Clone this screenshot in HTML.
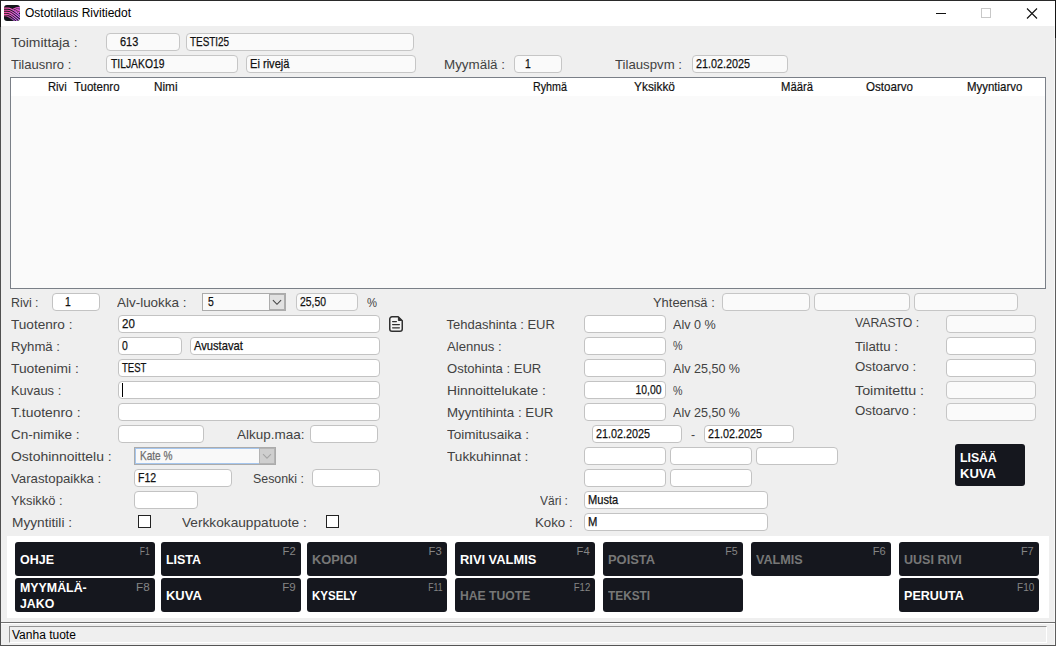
<!DOCTYPE html><html><head><meta charset="utf-8"><title>Ostotilaus Rivitiedot</title><style>
*{box-sizing:border-box;margin:0;padding:0}
html,body{width:1056px;height:646px;overflow:hidden;background:#efefef;font-family:"Liberation Sans",sans-serif;}
#w{position:absolute;left:0;top:0;width:1056px;height:646px;background:#efefef;overflow:hidden}
.a{position:absolute}
.l{position:absolute;font-size:13px;color:#424242;white-space:nowrap;line-height:16px;height:16px;transform-origin:0 50%}
.i{position:absolute;border:1px solid #c3c3c3;border-radius:4px;background:#fff;height:18px;overflow:hidden}
.i.r{background:#fafafa;border-color:#c6c6c6}
.t{position:absolute;font-size:13px;color:#111;white-space:nowrap;line-height:16px;height:16px;transform-origin:0 50%;-webkit-text-stroke:0.25px #111}
.h{position:absolute;font-size:13px;color:#111;white-space:nowrap;line-height:16px;height:16px;transform-origin:0 50%;-webkit-text-stroke:0.2px #111}
.b{position:absolute;background:#15171e;border-radius:3px;height:34px;width:140px}
.n{position:absolute;font-weight:bold;font-size:12px;color:#fff;white-space:nowrap;line-height:16px;height:16px;transform-origin:0 50%}
.d .n{color:#777}
.k{position:absolute;font-size:10px;color:#858585;line-height:12px;height:12px;white-space:nowrap;transform-origin:100% 78%}
</style></head><body><div id="w">
<div class="a" style="left:0;top:0;width:1056px;height:26px;background:#fff"></div>
<svg class="a" style="left:4px;top:5px" width="16" height="16" viewBox="0 0 16 16"><defs><linearGradient id="g" x1="0" y1="0" x2="1" y2="0.5"><stop offset="0" stop-color="#f6529c"/><stop offset="0.45" stop-color="#e45ac8"/><stop offset="1" stop-color="#d06af4"/></linearGradient><clipPath id="c"><rect width="16" height="16" rx="3"/></clipPath></defs><rect width="16" height="16" rx="3" fill="#14161c"/><g clip-path="url(#c)" fill="none" stroke="url(#g)" stroke-width="1.15"><path d="M0 3.1 H4 C8 3.1 10 5.6 16 10.4"/><path d="M0 5.2 H3.5 C7.5 5.2 9.5 7.6 16 12.7"/><path d="M0 7.3 H3 C7 7.3 9 9.6 16 15.6"/><path d="M0 9.4 H2.5 C6 9.4 8 11.2 13.4 16"/><path d="M0 10.8 C4 10.6 6 12.2 10.8 16" stroke-opacity=".75"/><path d="M16 2.3 C13 2.3 11 3 9 4.2"/><path d="M16 3.8 C13.6 3.8 12.2 4.4 10.6 5.4"/><path d="M16 5.3 C14.2 5.3 13.2 5.9 12.2 6.6"/><path d="M16 6.8 C15 6.8 14.4 7.3 13.8 7.9"/></g></svg>
<div class="a" style="left:25px;top:5px;font-size:12px;line-height:16px;color:#000;white-space:nowrap">Ostotilaus Rivitiedot</div>
<svg class="a" style="left:930px;top:0px" width="124" height="26" viewBox="0 0 124 26"><path d="M6 13.5 H16" stroke="#111" stroke-width="1"/><rect x="51.5" y="8.5" width="9" height="9" fill="none" stroke="#c8c8c8" stroke-width="1"/><path d="M97 8.5 L107 18.5 M107 8.5 L97 18.5" stroke="#111" stroke-width="1.1"/></svg>
<div class="l" style="left:10.5px;top:35px;transform:scaleX(1.072)">Toimittaja :</div>
<div class="i r" style="left:106px;top:33px;width:74px;height:18px;"><div class="t" style="left:12.5px;top:-0.5px;transform:scaleX(0.842);">613</div></div>
<div class="i r" style="left:186px;top:33px;width:228px;height:18px;"><div class="t" style="left:3px;top:-0.5px;transform:scaleX(0.763);">TESTI25</div></div>
<div class="l" style="left:10.5px;top:57px;transform:scaleX(1.001)">Tilausnro :</div>
<div class="i r" style="left:106px;top:55px;width:132px;height:18px;"><div class="t" style="left:3.5px;top:-0.5px;transform:scaleX(0.795);">TILJAKO19</div></div>
<div class="i r" style="left:246px;top:55px;width:170px;height:18px;"><div class="t" style="left:3px;top:-0.5px;transform:scaleX(0.853);">Ei rivejä</div></div>
<div class="l" style="left:443.5px;top:57px;transform:scaleX(1.030)">Myymälä :</div>
<div class="i r" style="left:514px;top:55px;width:48px;height:18px;"><div class="t" style="left:10px;top:-0.5px;transform:scaleX(0.800);">1</div></div>
<div class="l" style="left:614.5px;top:57px;transform:scaleX(1.015)">Tilauspvm :</div>
<div class="i r" style="left:692px;top:55px;width:96px;height:18px;"><div class="t" style="left:3px;top:-0.5px;transform:scaleX(0.830);">21.02.2025</div></div>
<div class="a" style="left:10px;top:77px;width:1036px;height:212px;border:1px solid #7a7f87;background:#fafafa"><div class="a" style="left:0;top:0;width:1034px;height:18px;background:#fff"></div></div>
<div class="h" style="left:47.8px;top:79px;transform:scaleX(0.863)">Rivi</div>
<div class="h" style="left:74.0px;top:79px;transform:scaleX(0.883)">Tuotenro</div>
<div class="h" style="left:153.5px;top:79px;transform:scaleX(0.904)">Nimi</div>
<div class="h" style="left:532.5px;top:79px;transform:scaleX(0.826)">Ryhmä</div>
<div class="h" style="left:633.5px;top:79px;transform:scaleX(0.915)">Yksikkö</div>
<div class="h" style="left:780.5px;top:79px;transform:scaleX(0.868)">Määrä</div>
<div class="h" style="left:865.5px;top:79px;transform:scaleX(0.891)">Ostoarvo</div>
<div class="h" style="left:967.1px;top:79px;transform:scaleX(0.880)">Myyntiarvo</div>
<div class="l" style="left:10.5px;top:295px;transform:scaleX(0.952)">Rivi :</div>
<div class="i" style="left:52px;top:293px;width:48px;height:18px;"><div class="t" style="left:12px;top:-0.5px;transform:scaleX(0.800);">1</div></div>
<div class="l" style="left:116.5px;top:295px;transform:scaleX(1.034)">Alv-luokka :</div>
<div class="a" style="left:202px;top:293px;width:84px;height:18px;border:1px solid #ababab;background:#fafafa"><div class="t" style="left:5px;top:-0.5px;transform:scaleX(.8)">5</div><div class="a" style="right:0;top:0;width:16px;height:16px;background:#e1e1e1;border:1px solid #adadad"><svg class="a" style="left:0;top:0" width="14" height="14" viewBox="0 0 14 14"><path d="M2.9 5.2 L7 9.3 L11.1 5.2" stroke="#444" fill="none" stroke-width="1.1"/></svg></div></div>
<div class="i r" style="left:296px;top:293px;width:62px;height:18px;"><div class="t" style="left:3px;top:-0.5px;transform:scaleX(0.798);">25,50</div></div>
<div class="l" style="left:366.5px;top:295px;transform:scaleX(0.865)">%</div>
<div class="l" style="left:10.5px;top:317px;transform:scaleX(1.046)">Tuotenro :</div>
<div class="i" style="left:118px;top:315px;width:262px;height:18px;"><div class="t" style="left:3px;top:-0.5px;transform:scaleX(0.886);">20</div></div>
<div class="l" style="left:10.5px;top:339px;transform:scaleX(1.012)">Ryhmä :</div>
<div class="i" style="left:118px;top:337px;width:64px;height:18px;"><div class="t" style="left:3px;top:-0.5px;transform:scaleX(0.800);">0</div></div>
<div class="i" style="left:190px;top:337px;width:190px;height:18px;"><div class="t" style="left:3px;top:-0.5px;transform:scaleX(0.859);">Avustavat</div></div>
<div class="l" style="left:10.5px;top:361px;transform:scaleX(1.062)">Tuotenimi :</div>
<div class="i" style="left:118px;top:359px;width:262px;height:18px;"><div class="t" style="left:3px;top:-0.5px;transform:scaleX(0.734);">TEST</div></div>
<div class="l" style="left:10.5px;top:383px;transform:scaleX(0.993)">Kuvaus :</div>
<div class="i" style="left:118px;top:381px;width:262px;height:18px;"></div>
<div class="a" style="left:122px;top:383px;width:1px;height:14px;background:#000"></div>
<div class="l" style="left:10.5px;top:405px;transform:scaleX(1.069)">T.tuotenro :</div>
<div class="i" style="left:118px;top:403px;width:262px;height:18px;"></div>
<div class="l" style="left:10.5px;top:427px;transform:scaleX(1.042)">Cn-nimike :</div>
<div class="i" style="left:118px;top:425px;width:86px;height:18px;"></div>
<div class="l" style="left:237.0px;top:427px;transform:scaleX(1.038)">Alkup.maa:</div>
<div class="i" style="left:310px;top:425px;width:68px;height:18px;"></div>
<div class="l" style="left:10.5px;top:449px;transform:scaleX(1.072)">Ostohinnoittelu :</div>
<div class="a" style="left:134px;top:447px;width:142px;height:18px;border:1px solid #ababab;background:#fff"><div class="a" style="left:0;top:0;width:125px;height:16px;border:1px solid #a5c6ee;background:#f9f9f9"></div><div class="t" style="left:5px;top:-0.5px;color:#6d6d6d;-webkit-text-stroke-color:#6d6d6d;transform:scaleX(.775)">Kate %</div><div class="a" style="right:0;top:0;width:16px;height:16px;background:#cfcfcf;border:1px solid #b4b4b4"><svg class="a" style="left:0;top:0" width="14" height="14" viewBox="0 0 14 14"><path d="M3 5.2 L7 9.2 L11 5.2" stroke="#a6a6a6" fill="none" stroke-width="1.1"/></svg></div></div>
<div class="l" style="left:10.5px;top:471px;transform:scaleX(1.018)">Varastopaikka :</div>
<div class="i" style="left:134px;top:469px;width:98px;height:18px;"><div class="t" style="left:3px;top:-0.5px;transform:scaleX(0.811);">F12</div></div>
<div class="l" style="left:252.8px;top:471px;transform:scaleX(0.952)">Sesonki :</div>
<div class="i" style="left:312px;top:469px;width:68px;height:18px;"></div>
<div class="l" style="left:10.5px;top:493px;transform:scaleX(0.990)">Yksikkö :</div>
<div class="i" style="left:134px;top:491px;width:64px;height:18px;"></div>
<div class="l" style="left:12.0px;top:515px;transform:scaleX(1.052)">Myyntitili :</div>
<div class="a" style="left:138px;top:515px;width:13px;height:13px;border:1px solid #222;background:#fff"></div>
<div class="l" style="left:181.5px;top:515px;transform:scaleX(1.052)">Verkkokauppatuote :</div>
<div class="a" style="left:326px;top:515px;width:13px;height:13px;border:1px solid #222;background:#fff"></div>
<svg class="a" style="left:389px;top:316px" width="14" height="16" viewBox="0 0 14 16"><path d="M3 .75 H9.2 L13.25 4.8 V13 a2.25 2.25 0 0 1 -2.25 2.25 H3 a2.25 2.25 0 0 1 -2.25 -2.25 V3 a2.25 2.25 0 0 1 2.25 -2.25 Z" fill="#f6f6f6" stroke="#303030" stroke-width="1.5" stroke-linejoin="round"/><path d="M9.4 1.2 V4.5 H12.7 Z" fill="#303030" stroke="#303030" stroke-width="1" stroke-linejoin="round"/><path d="M3.6 5.55 H7.4 M3.6 8.6 H10.4 M3.6 11.75 H10.4" stroke="#303030" stroke-width="1.25" stroke-linecap="round"/></svg>
<div class="l" style="left:446.5px;top:317px;transform:scaleX(1.000)">Tehdashinta : EUR</div>
<div class="i" style="left:584px;top:315px;width:82px;height:18px;"></div>
<div class="l" style="left:672.5px;top:317px;transform:scaleX(0.971)">Alv 0 %</div>
<div class="l" style="left:446.5px;top:339px;transform:scaleX(1.009)">Alennus :</div>
<div class="i" style="left:584px;top:337px;width:82px;height:18px;"></div>
<div class="l" style="left:672.5px;top:338px;transform:scaleX(0.822)">%</div>
<div class="l" style="left:446.5px;top:361px;transform:scaleX(1.003)">Ostohinta : EUR</div>
<div class="i" style="left:584px;top:359px;width:82px;height:18px;"></div>
<div class="l" style="left:672.5px;top:361px;transform:scaleX(0.966)">Alv 25,50 %</div>
<div class="l" style="left:446.5px;top:383px;transform:scaleX(1.060)">Hinnoittelukate :</div>
<div class="i" style="left:584px;top:381px;width:82px;height:18px;"><div class="t" style="right:3px;top:-0.5px;transform-origin:100% 50%;transform:scaleX(0.798);">10,00</div></div>
<div class="l" style="left:672.5px;top:383px;transform:scaleX(0.822)">%</div>
<div class="l" style="left:446.5px;top:405px;transform:scaleX(1.022)">Myyntihinta : EUR</div>
<div class="i" style="left:584px;top:403px;width:82px;height:18px;"></div>
<div class="l" style="left:672.5px;top:405px;transform:scaleX(0.966)">Alv 25,50 %</div>
<div class="l" style="left:446.5px;top:427px;transform:scaleX(1.041)">Toimitusaika :</div>
<div class="i" style="left:592px;top:425px;width:90px;height:18px;"><div class="t" style="left:3px;top:-0.5px;transform:scaleX(0.830);">21.02.2025</div></div>
<div class="l" style="left:691.2px;top:427px;transform:scaleX(0.947)">-</div>
<div class="i" style="left:704px;top:425px;width:90px;height:18px;"><div class="t" style="left:3px;top:-0.5px;transform:scaleX(0.830);">21.02.2025</div></div>
<div class="l" style="left:446.5px;top:449px;transform:scaleX(1.048)">Tukkuhinnat :</div>
<div class="i" style="left:584px;top:447px;width:82px;height:18px;"></div>
<div class="i" style="left:670px;top:447px;width:82px;height:18px;"></div>
<div class="i" style="left:756px;top:447px;width:82px;height:18px;"></div>
<div class="i" style="left:584px;top:469px;width:82px;height:18px;"></div>
<div class="i" style="left:670px;top:469px;width:82px;height:18px;"></div>
<div class="l" style="left:540.3px;top:493px;transform:scaleX(0.921)">Väri :</div>
<div class="i" style="left:584px;top:491px;width:184px;height:18px;"><div class="t" style="left:3px;top:-0.5px;transform:scaleX(0.854);">Musta</div></div>
<div class="l" style="left:534.9px;top:515px;transform:scaleX(1.020)">Koko :</div>
<div class="i" style="left:584px;top:513px;width:184px;height:18px;"><div class="t" style="left:3px;top:-0.5px;transform:scaleX(0.862);">M</div></div>
<div class="l" style="left:652.8px;top:295px;transform:scaleX(0.993)">Yhteensä :</div>
<div class="i r" style="left:722px;top:293px;width:88px;height:18px;"></div>
<div class="i r" style="left:814px;top:293px;width:96px;height:18px;"></div>
<div class="i r" style="left:914px;top:293px;width:104px;height:18px;"></div>
<div class="l" style="left:855.0px;top:315px;transform:scaleX(0.942)">VARASTO :</div>
<div class="i r" style="left:946px;top:315px;width:90px;height:18px;"></div>
<div class="l" style="left:855.0px;top:339px;transform:scaleX(1.020)">Tilattu :</div>
<div class="i" style="left:946px;top:337px;width:90px;height:18px;"></div>
<div class="l" style="left:855.0px;top:359px;transform:scaleX(1.019)">Ostoarvo :</div>
<div class="i" style="left:946px;top:359px;width:90px;height:18px;"></div>
<div class="l" style="left:855.0px;top:383px;transform:scaleX(1.098)">Toimitettu :</div>
<div class="i r" style="left:946px;top:381px;width:90px;height:18px;"></div>
<div class="l" style="left:855.0px;top:403px;transform:scaleX(1.019)">Ostoarvo :</div>
<div class="i r" style="left:946px;top:403px;width:90px;height:18px;"></div>
<div class="b" style="left:955px;top:444px;width:70px;height:42px"></div>
<div class="n" style="left:960.0px;top:449.9px;transform:scaleX(1.022)">LISÄÄ</div>
<div class="n" style="left:960.0px;top:465.7px;transform:scaleX(1.087)">KUVA</div>
<div class="a" style="left:7px;top:536px;width:1042px;height:82px;background:#fff"></div>
<div class="b" style="left:15px;top:542px"></div>
<div class="e"><div class="n" style="left:19.8px;top:551.7px;transform:scaleX(1.040)">OHJE</div></div>
<div class="k" style="right:906.0px;top:545.5px;transform:scale(0.843,1)">F1</div>
<div class="b" style="left:161px;top:542px"></div>
<div class="e"><div class="n" style="left:165.8px;top:551.7px;transform:scaleX(1.036)">LISTA</div></div>
<div class="k" style="right:760.0px;top:545.5px;transform:scale(1.124,1)">F2</div>
<div class="b" style="left:307px;top:542px"></div>
<div class="d"><div class="n" style="left:311.8px;top:551.7px;transform:scaleX(1.071)">KOPIOI</div></div>
<div class="k" style="right:614.0px;top:545.5px;transform:scale(1.124,1)">F3</div>
<div class="b" style="left:455px;top:542px"></div>
<div class="e"><div class="n" style="left:459.8px;top:551.7px;transform:scaleX(1.073)">RIVI VALMIS</div></div>
<div class="k" style="right:466.0px;top:545.5px;transform:scale(1.124,1)">F4</div>
<div class="b" style="left:603px;top:542px"></div>
<div class="d"><div class="n" style="left:607.8px;top:551.7px;transform:scaleX(1.076)">POISTA</div></div>
<div class="k" style="right:318.0px;top:545.5px;transform:scale(1.059,1)">F5</div>
<div class="b" style="left:751px;top:542px"></div>
<div class="d"><div class="n" style="left:755.8px;top:551.7px;transform:scaleX(1.053)">VALMIS</div></div>
<div class="k" style="right:170.0px;top:545.5px;transform:scale(1.106,1)">F6</div>
<div class="b" style="left:899px;top:542px"></div>
<div class="d"><div class="n" style="left:903.8px;top:551.7px;transform:scaleX(1.044)">UUSI RIVI</div></div>
<div class="k" style="right:22.0px;top:545.5px;transform:scale(1.096,1)">F7</div>
<div class="b" style="left:15px;top:578px"></div>
<div class="e"><div class="n" style="left:19.8px;top:580.2px;transform:scaleX(1.032)">MYYMÄLÄ-</div><div class="n" style="left:19.8px;top:595.7px;transform:scaleX(1.026)">JAKO</div></div>
<div class="k" style="right:906.0px;top:581.5px;transform:scale(1.171,1)">F8</div>
<div class="b" style="left:161px;top:578px"></div>
<div class="e"><div class="n" style="left:165.8px;top:587.7px;transform:scaleX(1.080)">KUVA</div></div>
<div class="k" style="right:760.0px;top:581.5px;transform:scale(1.153,1)">F9</div>
<div class="b" style="left:307px;top:578px"></div>
<div class="e"><div class="n" style="left:311.8px;top:587.7px;transform:scaleX(0.959)">KYSELY</div></div>
<div class="k" style="right:614.0px;top:581.5px;transform:scale(0.865,1)">F11</div>
<div class="b" style="left:455px;top:578px"></div>
<div class="d"><div class="n" style="left:459.8px;top:587.7px;transform:scaleX(1.015)">HAE TUOTE</div></div>
<div class="k" style="right:466.0px;top:581.5px;transform:scale(0.961,1)">F12</div>
<div class="b" style="left:603px;top:578px"></div>
<div class="d"><div class="n" style="left:607.8px;top:587.7px;transform:scaleX(0.987)">TEKSTI</div></div>

<div class="b" style="left:899px;top:578px"></div>
<div class="e"><div class="n" style="left:903.8px;top:587.7px;transform:scaleX(1.047)">PERUUTA</div></div>
<div class="k" style="right:22.0px;top:581.5px;transform:scale(0.998,1)">F10</div>
<div class="a" style="left:1px;top:622px;width:1054px;height:1px;background:#6e6e6e"></div>
<div class="a" style="left:1px;top:623px;width:1054px;height:1px;background:#fdfdfd"></div>
<div class="a" style="left:9px;top:626px;width:1038px;height:17px;border:1px solid #939393;border-right-color:#fff;border-bottom-color:#fff;background:#efefef"></div>
<div class="a" style="left:12px;top:628px;font-size:12px;line-height:15px;color:#000;white-space:nowrap">Vanha tuote</div>
<div class="a" style="left:0;top:0;width:1056px;height:1px;background:#2a2a2a"></div>
<div class="a" style="left:0;top:0;width:1px;height:646px;background:#505050"></div>
<div class="a" style="left:0;top:0;width:1px;height:27px;background:#1a1a1a"></div>
<div class="a" style="left:1054px;top:26px;width:1px;height:596px;background:#f8f8f8"></div>
<div class="a" style="left:1054px;top:623px;width:1px;height:22px;background:#f8f8f8"></div>
<div class="a" style="left:1055px;top:0;width:1px;height:646px;background:#5e5e5e"></div>
<div class="a" style="left:1055px;top:0;width:1px;height:38px;background:#151515"></div>
<div class="a" style="left:0;top:645px;width:1056px;height:1px;background:#555"></div>
</div></body></html>
